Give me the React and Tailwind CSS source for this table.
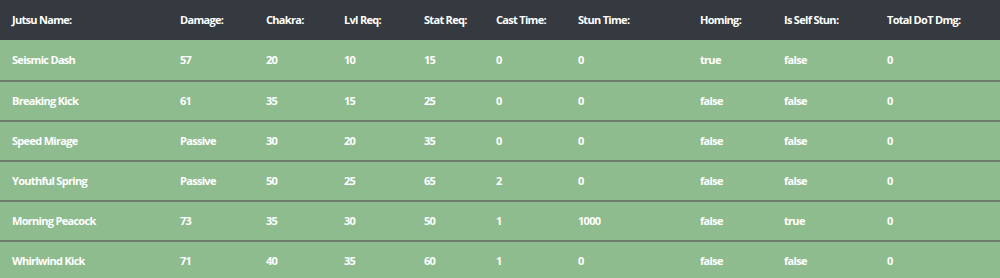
const columns = [
  "Jutsu Name:",
  "Damage:",
  "Chakra:",
  "Lvl Req:",
  "Stat Req:",
  "Cast Time:",
  "Stun Time:",
  "Homing:",
  "Is Self Stun:",
  "Total DoT Dmg:",
];

const rows = [
  ["Seismic Dash", "57", "20", "10", "15", "0", "0", "true", "false", "0"],
  ["Breaking Kick", "61", "35", "15", "25", "0", "0", "false", "false", "0"],
  ["Speed Mirage", "Passive", "30", "20", "35", "0", "0", "false", "false", "0"],
  ["Youthful Spring", "Passive", "50", "25", "65", "2", "0", "false", "false", "0"],
  ["Morning Peacock", "73", "35", "30", "50", "1", "1000", "false", "true", "0"],
  ["Whirlwind Kick", "71", "40", "35", "60", "1", "0", "false", "false", "0"],
];

const grid =
  "grid grid-cols-[168px_86px_78px_80px_72px_82px_122px_84px_103px_1fr]";

export default function App() {
  return (
    <div
      className="w-[1000px] h-[278px] overflow-hidden bg-[#8fbc8f] text-white text-[11px] font-bold tracking-[-0.7px]"
      style={{ fontFamily: '"Open Sans", "Liberation Sans", sans-serif' }}
    >
      {/* HEADER */}
      <div className={`${grid} h-[40px] items-center bg-[#343a40]`}>
        {columns.map((c) => (
          <div key={c} className="pl-3">
            {c}
          </div>
        ))}
      </div>

      {/* ROWS */}
      {rows.map((r, i) => (
        <div
          key={r[0]}
          className={`${grid} h-[40px] items-center ${
            i > 0 ? "border-t-2 border-[#6d7d6d]" : ""
          }`}
        >
          {r.map((v, j) => (
            <div key={j} className="pl-3">
              {v}
            </div>
          ))}
        </div>
      ))}
    </div>
  );
}
